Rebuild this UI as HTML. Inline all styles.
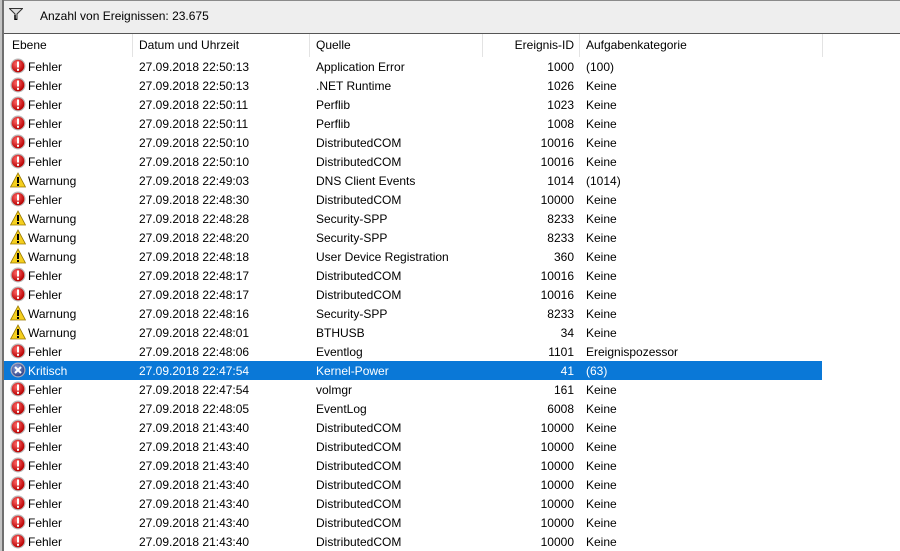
<!DOCTYPE html>
<html><head><meta charset="utf-8"><style>
html,body{margin:0;width:900px;height:551px;overflow:hidden}
body{background:#fff;font-family:"Liberation Sans",sans-serif;font-size:12px;color:#000;position:relative}
.a{position:absolute;white-space:nowrap}
#top{position:absolute;left:0;top:0;width:900px;height:32px;background:#eeeeee;border-top:1px solid #8a8a8a;border-bottom:1px solid #555}
#lb{position:absolute;left:0;top:0;width:2px;height:551px;background:#c4c4c4}
#lb2{position:absolute;left:2px;top:0;width:2px;height:551px;background:#707070}
.sep{position:absolute;top:34px;width:1px;height:23px;background:#e3e3e3}
.row{position:absolute;left:4px;width:818px;height:19px}
.row span{position:absolute;top:3px;white-space:nowrap}
.sel{background:#0a78d7;color:#fff}
.ic{position:absolute;left:6px;top:1px;width:16px;height:16px}
</style></head><body>
<div id="top"></div>
<div id="lb"></div><div id="lb2"></div>
<svg class="a" style="left:9px;top:8px" width="14" height="12" viewBox="0 0 14 12"><path d="M0.5 0.5 H13.5 L8 6 V11.5 H6 V6 Z" fill="#ddd" stroke="#333" stroke-width="1"/><path d="M6 7 V11.5 H8" stroke="#000" stroke-width="1.5" fill="none"/></svg>
<div class="a" style="left:40px;top:9px">Anzahl von Ereignissen: 23.675</div>
<div class="sep" style="left:132px"></div><div class="sep" style="left:309px"></div><div class="sep" style="left:482px"></div><div class="sep" style="left:579px"></div><div class="sep" style="left:822px"></div>
<div class="a" style="left:12px;top:38px">Ebene</div>
<div class="a" style="left:139px;top:38px">Datum und Uhrzeit</div>
<div class="a" style="left:316px;top:38px">Quelle</div>
<div class="a" style="left:482px;width:92px;text-align:right;top:38px">Ereignis-ID</div>
<div class="a" style="left:586px;top:38px">Aufgabenkategorie</div>
<div id="rows"></div>
<svg width="0" height="0" style="position:absolute;left:0;top:0"><defs>
<radialGradient id="rg" cx="40%" cy="35%" r="65%"><stop offset="0" stop-color="#ff6a6a"/><stop offset="1" stop-color="#b80000"/></radialGradient>
<radialGradient id="bg" cx="40%" cy="35%" r="65%"><stop offset="0" stop-color="#8aa0d8"/><stop offset="1" stop-color="#34468a"/></radialGradient>
<symbol id="err" viewBox="0 0 16 16"><circle cx="8" cy="8" r="7.5" fill="#bbb"/><circle cx="8" cy="8" r="6.3" fill="url(#rg)"/><rect x="7" y="3.5" width="2" height="6" fill="#fff"/><rect x="7" y="10.8" width="2" height="2" fill="#fff"/></symbol>
<symbol id="warn" viewBox="0 0 16 16"><path d="M8 1 L15.5 15 H0.5 Z" fill="#f5cf1e" stroke="#9a7a00" stroke-width="0.8"/><rect x="7" y="5" width="2" height="6" fill="#000"/><rect x="7" y="12" width="2" height="2" fill="#000"/></symbol>
<symbol id="crit" viewBox="0 0 16 16"><circle cx="8" cy="8" r="7.5" fill="#aab"/><circle cx="8" cy="8" r="6.3" fill="url(#bg)"/><path d="M5 5 L11 11 M11 5 L5 11" stroke="#fff" stroke-width="2"/></symbol>
</defs></svg>
<script>
var d=[
["F","27.09.2018 22:50:13","Application Error","1000","(100)"],
["F","27.09.2018 22:50:13",".NET Runtime","1026","Keine"],
["F","27.09.2018 22:50:11","Perflib","1023","Keine"],
["F","27.09.2018 22:50:11","Perflib","1008","Keine"],
["F","27.09.2018 22:50:10","DistributedCOM","10016","Keine"],
["F","27.09.2018 22:50:10","DistributedCOM","10016","Keine"],
["W","27.09.2018 22:49:03","DNS Client Events","1014","(1014)"],
["F","27.09.2018 22:48:30","DistributedCOM","10000","Keine"],
["W","27.09.2018 22:48:28","Security-SPP","8233","Keine"],
["W","27.09.2018 22:48:20","Security-SPP","8233","Keine"],
["W","27.09.2018 22:48:18","User Device Registration","360","Keine"],
["F","27.09.2018 22:48:17","DistributedCOM","10016","Keine"],
["F","27.09.2018 22:48:17","DistributedCOM","10016","Keine"],
["W","27.09.2018 22:48:16","Security-SPP","8233","Keine"],
["W","27.09.2018 22:48:01","BTHUSB","34","Keine"],
["F","27.09.2018 22:48:06","Eventlog","1101","Ereignispozessor"],
["K","27.09.2018 22:47:54","Kernel-Power","41","(63)"],
["F","27.09.2018 22:47:54","volmgr","161","Keine"],
["F","27.09.2018 22:48:05","EventLog","6008","Keine"]];
for(var i=0;i<7;i++)d.push(["F","27.09.2018 21:43:40","DistributedCOM","10000","Keine"]);
var h="";
d.forEach(function(r,i){
var t={F:["err","Fehler"],W:["warn","Warnung"],K:["crit","Kritisch"]}[r[0]];
h+='<div class="row'+(r[0]=="K"?' sel':'')+'" style="top:'+(57+19*i)+'px"><svg class="ic"><use href="#'+t[0]+'"/></svg><span style="left:24px">'+t[1]+'</span><span style="left:135px">'+r[1]+'</span><span style="left:312px">'+r[2]+'</span><span style="left:478px;width:92px;text-align:right">'+r[3]+'</span><span style="left:582px">'+r[4]+'</span></div>';
});
document.getElementById("rows").innerHTML=h;
</script>
</body></html>
